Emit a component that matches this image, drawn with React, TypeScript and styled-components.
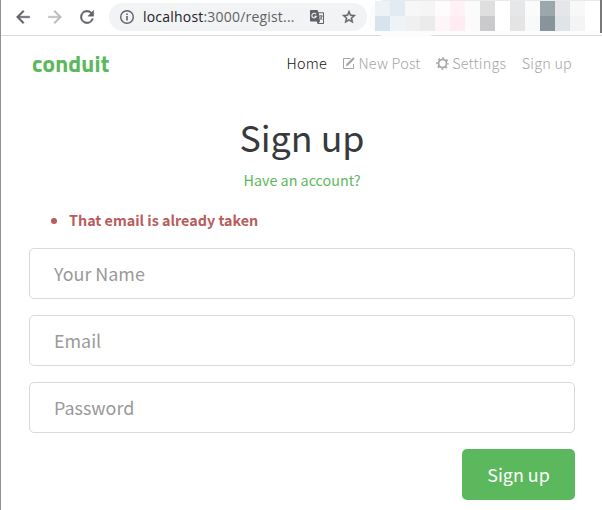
import React from "react";
import styled, { createGlobalStyle } from "styled-components";

const sans = `"Noto Sans CJK SC", "Open Sans", sans-serif`;

const GlobalStyle = createGlobalStyle`
  * { box-sizing: border-box; }
  body { margin: 0; background: #fff; overflow: hidden; }
`;

const Window = styled.div`
  height: 510px;
  width: 602px;
  border-left: 1px solid #919191;
  font-family: ${sans};
  overflow: hidden;
`;

const Toolbar = styled.header`
  position: relative;
  display: flex;
  align-items: flex-start;
  height: 36px;
  padding: 3px 0 0 12px;
  border-bottom: 1px solid #d9dadc;
`;

const ToolIcon = styled.svg<{ $color?: string }>`
  display: block;
  flex: none;
  width: 20px;
  height: 20px;
  margin: 4px 12px 0 0;
  fill: ${(p) => p.$color ?? "#5f6368"};
  stroke: ${(p) => p.$color ?? "#5f6368"};
  stroke-width: 0.5;
`;

const AddressBar = styled.div`
  display: flex;
  align-items: center;
  width: 258px;
  height: 28px;
  padding: 0 10px;
  border-radius: 14px;
  background: #f1f3f4;
`;

const BarIcon = styled.svg`
  display: block;
  flex: none;
  width: 16px;
  height: 16px;
  fill: #5f6368;
`;

const StarIcon = styled(BarIcon)`
  margin-left: 16px;
  stroke: #5f6368;
  stroke-width: 0.7;
`;

const Url = styled.div`
  flex: none;
  width: 174px;
  padding-left: 8px;
  font: 14px/28px "Open Sans", sans-serif;
  letter-spacing: 0.2px;
  color: #5f6368;
  white-space: nowrap;
  span { color: #202124; }
`;

const Extensions = styled.div`
  position: absolute;
  top: 0;
  left: 368px;
  width: 233px;
  height: 38px;
  padding: 1px 0 0 6px;
  background: linear-gradient(#e9eaee 1px, #fcfcfc 1px);
  border-radius: 16px 0 0 24px / 18px 0 0 18px;
  clip-path: polygon(0 0, 100% 0, 100% 35px, 65px 35px, 50px 38px, 0 38px);
`;

const Mosaic = styled.div`
  display: grid;
  grid-template-columns: repeat(15, 15px);
  grid-auto-rows: 15px;
`;

const Tile = styled.i<{ $tone: string }>`
  background: ${(p) => p.$tone};
`;

const WindowEdge = styled.div`
  position: absolute;
  top: 0;
  right: 0;
  width: 2px;
  height: 33px;
  background: #79797a;
`;

const Navbar = styled.nav`
  display: flex;
  align-items: center;
  justify-content: space-between;
  height: 54px;
  padding: 0 30px 0 31px;
`;

const Brand = styled.a`
  font: 700 23.4px/32px "Titillium Web", "Noto Sans CJK SC", sans-serif;
  color: #5cb85c;
  letter-spacing: 0.2px;
`;

const NavList = styled.ul`
  display: flex;
  gap: 15.5px;
  margin: 0;
  padding: 0;
  list-style: none;
`;

const NavItem = styled.li<{ $active?: boolean }>`
  display: flex;
  align-items: center;
  gap: 3px;
  font-size: 14.4px;
  font-weight: 300;
  line-height: 24px;
  letter-spacing: 0.22px;
  white-space: nowrap;
  color: ${(p) => (p.$active ? "#111" : "#a5a5a5")};
  svg { display: block; fill: none; stroke: currentColor; }
`;

const Page = styled.main`
  display: flex;
  flex-direction: column;
  width: 574px;
  padding: 24px 0 0 28px;
`;

const Title = styled.h1`
  margin: 0;
  font-size: 35.8px;
  font-weight: 400;
  line-height: 44px;
  text-align: center;
  color: #373a3c;
`;

const AccountLink = styled.a`
  margin-top: 10px;
  font-size: 14.33px;
  font-weight: 400;
  line-height: 24px;
  text-align: center;
  color: #5cb85c;
`;

const Errors = styled.ul`
  margin: 16px 0;
  padding-left: 40px;
  font-size: 14.33px;
  font-weight: 700;
  line-height: 24px;
  color: #b85c5c;
`;

const Form = styled.form`
  display: flex;
  flex-direction: column;
  gap: 16px;
`;

const Field = styled.input`
  width: 100%;
  height: 51px;
  padding: 0 24px 2px;
  border: 1px solid #d9d9d9;
  border-radius: 5px;
  outline: none;
  font: 17.9px/26px ${sans};
  &::placeholder { color: #999; opacity: 1; }
`;

const Submit = styled.button`
  align-self: flex-end;
  width: 113px;
  height: 51px;
  padding: 0 0 2px;
  border: 0;
  border-radius: 5px;
  background: #5cb85c;
  color: #fff;
  font: 17.9px/26px ${sans};
`;

const tones = [
  "#edf2f6", "#e2ebf3", "#f7f7f7", "#f5f5f5", "#fffcfd", "#fff1f5", "#fbfbfb", "#dfdfdf", "#fff", "#e6e7e9", "#fafcfb", "#9ca7ac", "#e4e6e9", "#f8f8f9", "#fff",
  "#d8e4ed", "#edf3f7", "#f0f0f0", "#ebebeb", "#fdf5f8", "#ffebf2", "#fbfbfb", "#cacacc", "#fff", "#e4e4e5", "#f8fafa", "#87949b", "#dfe4e8", "#f4f4f4", "#fff",
];

export default function App() {
  return (
    <>
      <GlobalStyle />
      <Window>
        <Toolbar>
          <ToolIcon viewBox="0 0 24 24"><path d="M20 11H7.83l5.59-5.59L12 4l-8 8 8 8 1.41-1.41L7.83 13H20z" /></ToolIcon>
          <ToolIcon viewBox="0 0 24 24" $color="#babcbe"><path d="M12 4l-1.41 1.41L16.17 11H4v2h12.17l-5.58 5.59L12 20l8-8z" /></ToolIcon>
          <ToolIcon viewBox="0 0 24 24"><path d="M17.65 6.35A8 8 0 1 0 19.73 14h-2.08A6 6 0 1 1 12 6c1.66 0 3.14.69 4.22 1.78L13 11h7V4z" /></ToolIcon>
          <AddressBar>
            <BarIcon viewBox="0 0 16 16"><path fillRule="evenodd" d="M8 1a7 7 0 1 0 0 14A7 7 0 0 0 8 1zm0 1.4a5.6 5.6 0 1 1 0 11.2A5.6 5.6 0 0 1 8 2.4zM7.2 4.4h1.6V6H7.2zM7.2 7h1.6v4.5H7.2z" /></BarIcon>
            <Url><span>localhost</span>:3000/regist...</Url>
            <BarIcon viewBox="0 0 16 16">
              <path d="M2 1h6.5l.9 2.3H14c.6 0 1 .4 1 1V14c0 .6-.4 1-1 1H8.6l-.9-2.4H2c-.6 0-1-.4-1-1V2c0-.6.4-1 1-1z" />
              <path fill="#f1f3f4" d="M9.8 4.2H14v9.9H9.5l1.5-1.7z" />
              <path fill="none" stroke="#f1f3f4" strokeWidth="1.1" d="M7 5.2a2.3 2.3 0 1 0 .3 2.2H5.5" />
              <path fill="none" stroke="#5f6368" strokeWidth=".9" d="M10 7h3.8M12 6v1M13 7c-.4 1.8-1.2 2.8-2.2 3.8M11 8.2l2.3 2.8" />
            </BarIcon>
            <StarIcon viewBox="0 0 24 24"><path d="M22 9.24l-7.19-.62L12 2 9.19 8.63 2 9.24l5.46 4.73L5.82 21 12 17.27 18.18 21l-1.63-7.03zM12 15.4l-3.76 2.27 1-4.28-3.32-2.88 4.38-.38L12 6.1l1.71 4.04 4.38.38-3.32 2.88 1 4.28z" /></StarIcon>
          </AddressBar>
          <Extensions>
            <Mosaic>{tones.map((tone, i) => <Tile key={i} $tone={tone} />)}</Mosaic>
          </Extensions>
          <WindowEdge />
        </Toolbar>
        <Navbar>
          <Brand>conduit</Brand>
          <NavList>
            <NavItem $active>Home</NavItem>
            <NavItem>
              <svg width="13" height="13" viewBox="0 0 13 13">
                <path d="M8.5 1.5h-7v10h10V7" />
                <path fill="currentColor" stroke="none" d="M11.2.3l1.5 1.4-6.3 6.6-2.6.9.8-2.5z" />
              </svg>
              New Post
            </NavItem>
            <NavItem>
              <svg width="13" height="13" viewBox="0 0 13 13">
                <circle cx="6.5" cy="6.5" r="4" strokeWidth="1.7" />
                <circle cx="6.5" cy="6.5" r="5.5" strokeWidth="1.5" strokeDasharray="2.1 2.22" strokeDashoffset="1.05" />
              </svg>
              Settings
            </NavItem>
            <NavItem>Sign up</NavItem>
          </NavList>
        </Navbar>
        <Page>
          <Title>Sign up</Title>
          <AccountLink>Have an account?</AccountLink>
          <Errors><li>That email is already taken</li></Errors>
          <Form>
            <Field placeholder="Your Name" />
            <Field placeholder="Email" />
            <Field placeholder="Password" type="password" />
            <Submit type="button">Sign up</Submit>
          </Form>
        </Page>
      </Window>
    </>
  );
}
